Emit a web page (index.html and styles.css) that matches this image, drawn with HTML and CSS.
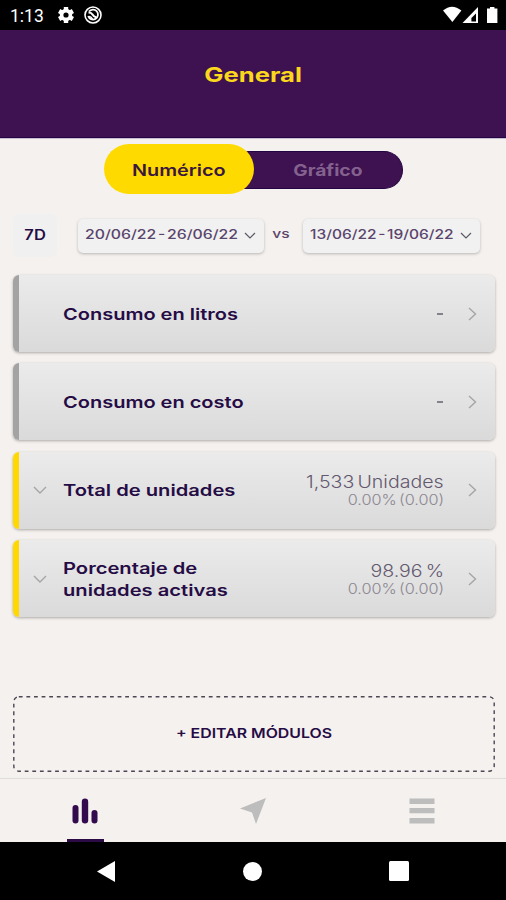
FILE: index.html
```
<!DOCTYPE html>
<html lang="es">

<head>
    <meta charset="UTF-8">
    <meta name="viewport" content="width=device-width, initial-scale=1.0">
    <title>General</title>
    <link rel="stylesheet" href="styles.css">
</head>

<body>
    <div class="status">
        <span class="hora">1:13</span>
        <svg class="engrane" width="16" height="18" viewBox="0 0 16 18">
            <circle cx="8" cy="9" r="4.4" fill="none" stroke="#fff" stroke-width="3.6" />
            <g stroke="#fff" stroke-width="4.4">
                <path d="M8 1v3M8 14v3M1.1 5l2.6 1.5M12.3 11.5l2.6 1.5M1.1 13l2.6-1.5M12.3 6.5l2.6-1.5" />
            </g>
        </svg>
        <svg class="alerta" width="18" height="18" viewBox="0 0 18 18" fill="none" stroke="#fff">
            <circle cx="9" cy="9" r="8" stroke-width="1.6" />
            <path d="M5 5.500a5 5 0 1 1-.8 4.500" stroke-width="1.8" />
            <path d="M4.500 6.500q3 0 4 2t4 3" stroke-width="2" />
            <path d="M5 10.500q2 0 3.500 2.500" stroke-width="1.5" />
        </svg>
        <svg class="senal" width="56" height="18" viewBox="0 0 56 18">
            <path d="M0 4.6Q9-3 18.4 4.6L9.4 16z" fill="#fff" />
            <path d="M35 1v16H19.5z" fill="#fff" />
            <path d="M33 7.500v8h-4.600V12z" fill="#000" />
            <path d="M44 2.6h3V1h4.400v1.600h3V17H44z" fill="#fff" />
        </svg>
    </div>

    <header>
        <h1><span class="ancho">General</span></h1>
    </header>

    <main>
        <div class="selector">
            <div class="opcion activa"><span class="ancho">Numérico</span></div>
            <div class="opcion"><span class="ancho">Gráfico</span></div>
        </div>

        <div class="filtros">
            <div class="periodo"><span class="ancho">7D</span></div>
            <div class="fecha fecha1">
                <span class="ancho">20/06/22 - 26/06/22</span>
                <svg width="12" height="7" viewBox="0 0 12 7"><path d="M1 1l5 5 5-5" /></svg>
            </div>
            <div class="vs"><span class="ancho">vs</span></div>
            <div class="fecha fecha2">
                <span class="ancho">13/06/22 - 19/06/22</span>
                <svg width="12" height="7" viewBox="0 0 12 7"><path d="M1 1l5 5 5-5" /></svg>
            </div>
        </div>

        <div class="tarjetas">
            <div class="tarjeta">
                <div class="abrir"></div>
                <h2><span class="ancho">Consumo en litros</span></h2>
                <div class="valor"><span class="guion"></span></div>
                <svg class="flecha" width="9" height="14" viewBox="0 0 9 14"><path d="M1 1l6.500 6-6.500 6" /></svg>
            </div>
            <div class="tarjeta">
                <div class="abrir"></div>
                <h2><span class="ancho">Consumo en costo</span></h2>
                <div class="valor"><span class="guion"></span></div>
                <svg class="flecha" width="9" height="14" viewBox="0 0 9 14"><path d="M1 1l6.500 6-6.500 6" /></svg>
            </div>
            <div class="tarjeta amarilla">
                <div class="abrir">
                    <svg width="14" height="8" viewBox="0 0 14 8"><path d="M1 1l6 6 6-6" /></svg>
                </div>
                <h2><span class="ancho">Total de unidades</span></h2>
                <div class="valor">
                    <span class="ancho numero">1,533 Unidades</span>
                    <span class="ancho cambio">0.00% (0.00)</span>
                </div>
                <svg class="flecha" width="9" height="14" viewBox="0 0 9 14"><path d="M1 1l6.500 6-6.500 6" /></svg>
            </div>
            <div class="tarjeta amarilla">
                <div class="abrir">
                    <svg width="14" height="8" viewBox="0 0 14 8"><path d="M1 1l6 6 6-6" /></svg>
                </div>
                <h2><span class="ancho">Porcentaje de<br>unidades activas</span></h2>
                <div class="valor">
                    <span class="ancho numero">98.96 %</span>
                    <span class="ancho cambio">0.00% (0.00)</span>
                </div>
                <svg class="flecha" width="9" height="14" viewBox="0 0 9 14"><path d="M1 1l6.500 6-6.500 6" /></svg>
            </div>
        </div>

        <div class="editar">
            <svg class="borde" width="482" height="76">
                <rect x="0.8" y="0.8" width="480.400" height="74.400" rx="5" />
            </svg>
            <span class="ancho">+ EDITAR MÓDULOS</span>
        </div>
    </main>

    <nav>
        <div class="tab actual">
            <svg width="26" height="26" viewBox="0 0 26 26">
                <rect x="0.500" y="7" width="6" height="18.500" rx="3" />
                <rect x="9.800" y="0.500" width="6.400" height="25" rx="3.200" />
                <rect x="19.500" y="12" width="6" height="13.500" rx="3" />
            </svg>
        </div>
        <div class="tab">
            <svg width="26" height="26" viewBox="0 0 26 26"><path d="M26 0L16 26l-4-11.500L0 10.500z" /></svg>
        </div>
        <div class="tab">
            <svg width="26" height="26" viewBox="0 0 26 26">
                <path d="M0.500 0.500h25v5.500h-25zM0.500 10h25v5.300h-25zM0.500 20h25v5.500h-25z" />
            </svg>
        </div>
    </nav>

    <div class="botones">
        <svg width="18" height="21" viewBox="0 0 18 21"><path d="M18 0v21L0 10.500z" /></svg>
        <svg width="19" height="19" viewBox="0 0 19 19"><circle cx="9.500" cy="9.500" r="9.500" /></svg>
        <svg width="20" height="20" viewBox="0 0 20 20"><rect width="20" height="20" rx="1.500" /></svg>
    </div>
</body>

</html>
```
FILE: styles.css
```
* {
    box-sizing: border-box;
}

body {
    margin: 0;
    height: 900px;
    display: flex;
    flex-direction: column;
    overflow: hidden;
    background-color: #f5f1ee;
    color: #260c45;
    font-family: Inter, 'Open Sans', sans-serif;
}

svg {
    display: block;
    flex: none;
}

h1,
h2 {
    margin: 0;
}

/* letra extendida */
.ancho {
    display: inline-block;
    white-space: nowrap;
    transform: scaleX(1.25);
}

.status {
    height: 30px;
    flex: none;
    display: flex;
    align-items: center;
    padding: 0 7px 0 10px;
    background-color: #000;
    color: #fff;
}

.hora {
    width: 48px;
    font: 400 17.5px Roboto, sans-serif;
    padding-top: 2px;
}

.alerta {
    margin-left: 10px;
}

.senal {
    margin-left: auto;
}

header {
    height: 108px;
    flex: none;
    padding-top: 33px;
    text-align: center;
    background-color: #3e1150;
    border-bottom: 1px solid #250444;
    box-shadow: 0 1px #c9c0d2;
    color: #fbd81c;
}

h1 {
    font-size: 20px;
    line-height: 24px;
    font-weight: 700;
}

h1 .ancho {
    transform: scaleX(1.28);
}

main {
    flex: 1;
    display: flex;
    flex-direction: column;
    padding: 6px 11px 6px 13px;
}

.selector {
    display: flex;
    align-items: center;
    align-self: center;
    width: 299px;
    height: 50px;
    margin-right: 2px;
}

.opcion {
    flex: 1;
    height: 38px;
    margin: 1px 0 0 -20px;
    padding-left: 20px;
    display: flex;
    align-items: center;
    justify-content: center;
    background-color: #3e1150;
    border: solid #250444;
    border-width: 1px 1px 1px 0;
    border-radius: 0 19px 19px 0;
    color: #84628f;
    font-size: 16px;
    font-weight: 700;
}

.opcion .ancho {
    transform: scaleX(1.2);
}

.opcion.activa {
    flex: none;
    width: 150px;
    height: 50px;
    margin: 0;
    padding: 2px 0 0;
    z-index: 1;
    border: 0;
    border-radius: 25px;
    background-color: #ffda00;
    color: #3b1740;
    font-weight: 600;
}

.opcion.activa .ancho {
    transform: scaleX(1.24);
}

.filtros {
    display: flex;
    align-items: center;
    height: 43px;
    margin-top: 20px;
}

.periodo {
    width: 44px;
    height: 43px;
    display: flex;
    align-items: center;
    justify-content: center;
    padding-bottom: 3px;
    border-radius: 6px;
    background-color: #f0f0f0;
    font-size: 14px;
    font-weight: 600;
}

.periodo .ancho {
    transform: scaleX(1.18);
}

.fecha {
    height: 34px;
    display: flex;
    align-items: center;
    justify-content: space-between;
    padding: 0 8px 2px 7px;
    border-radius: 5px;
    background-color: #f1f1f1;
    box-shadow: 0 1px 3px rgba(0, 0, 0, 0.25);
    color: #5a456c;
    font-size: 12.5px;
    font-weight: 500;
    word-spacing: -2px;
}

.fecha .ancho {
    transform-origin: left;
}

.fecha1 {
    width: 186px;
    margin-left: 21px;
}

.fecha1 .ancho {
    transform: scaleX(1.265);
}

.fecha2 {
    width: 177px;
}

.fecha2 .ancho {
    transform: scaleX(1.24);
}

.fecha svg {
    margin-top: 2px;
    fill: none;
    stroke: #5d5863;
    stroke-width: 1.2;
}

.vs {
    width: 39px;
    padding: 0 5px 4px 0;
    text-align: center;
    color: #5a456c;
    font-size: 12.5px;
    font-weight: 500;
}

.tarjetas {
    display: flex;
    flex-direction: column;
    gap: 11.4px;
    margin-top: 18px;
}

.tarjeta {
    display: flex;
    align-items: center;
    height: 77px;
    padding-right: 18px;
    border-left: 6px solid #a3a3a3;
    border-radius: 6px;
    background: linear-gradient(#ebebeb, #dadada);
    box-shadow: 0 1px 3px rgba(0, 0, 0, 0.3);
}

.tarjeta.amarilla {
    border-left-color: #ffd800;
}

.abrir {
    width: 43.5px;
    padding-left: 14px;
}

.abrir svg,
.flecha {
    fill: none;
    stroke: #a5a5a5;
    stroke-width: 1.4;
}

h2 {
    font-size: 16px;
    line-height: 22px;
    font-weight: 600;
}

h2 .ancho {
    transform-origin: left;
}

.amarilla h2 .ancho {
    transform: scaleX(1.26);
}

.valor {
    flex: 1;
    display: flex;
    flex-direction: column;
    align-items: flex-end;
    margin-right: 24px;
    padding-top: 1px;
}

.valor .ancho {
    transform-origin: right;
}

.guion {
    width: 6px;
    height: 2px;
    margin-right: 1px;
    background-color: #85818a;
}

.numero {
    color: #63586f;
    font-size: 17px;
    line-height: 18px;
    font-weight: 300;
    word-spacing: -2px;
    transform: scaleX(1.15);
}

.cambio {
    color: #8b8690;
    font-size: 14px;
    line-height: 17px;
    font-weight: 300;
    word-spacing: -2px;
    transform: scaleX(1.16);
}

.editar {
    position: relative;
    display: flex;
    align-items: center;
    justify-content: center;
    height: 76px;
    margin-top: auto;
    padding-bottom: 2px;
    font-size: 13px;
    font-weight: 600;
}

.editar .ancho {
    transform: scaleX(1.22);
}

.borde {
    position: absolute;
    top: 0;
    left: 0;
}

.borde rect {
    fill: none;
    stroke: #4d4654;
    stroke-width: 1.4;
    stroke-dasharray: 3.8 3.8;
}

nav {
    height: 64px;
    flex: none;
    display: flex;
    padding-left: 1px;
    border-top: 1px solid #dededd;
}

.tab {
    flex: 1;
    display: flex;
    flex-direction: column;
    align-items: center;
    padding-top: 19px;
    fill: #bdbdbd;
}

.tab.actual {
    fill: #330a4d;
}

.tab.actual::after {
    content: '';
    width: 37px;
    height: 3px;
    margin-top: auto;
    background-color: #2c0b45;
}

.botones {
    height: 58px;
    flex: none;
    display: flex;
    align-items: center;
    justify-content: space-between;
    padding: 0 97px;
    background-color: #000;
    fill: #fff;
}
```
